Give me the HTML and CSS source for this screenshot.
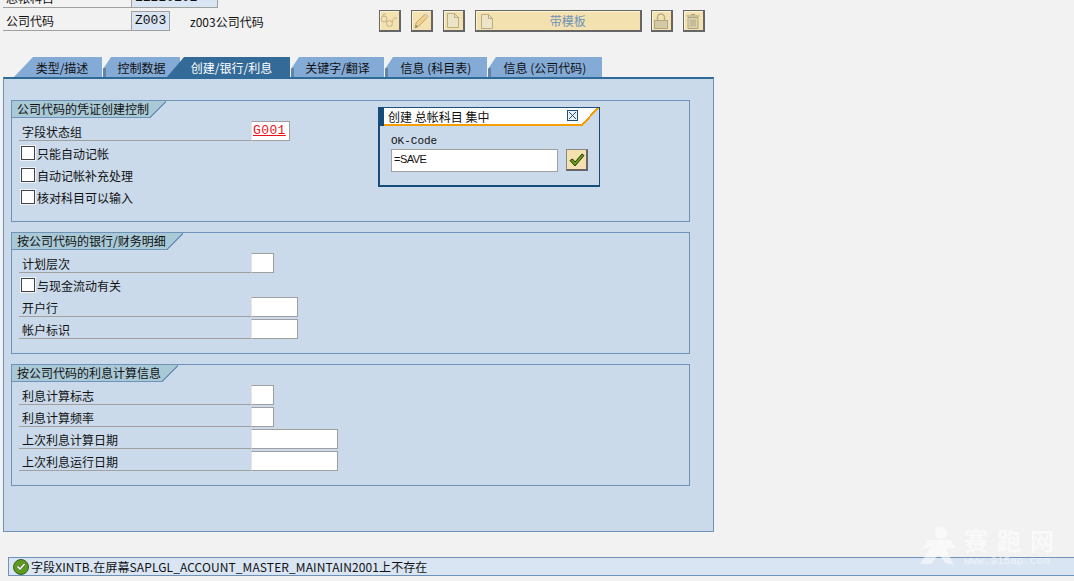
FILE: index.html
```html
<!DOCTYPE html>
<html lang="zh-CN">
<head>
    <meta charset="UTF-8">
    <title>创建 总帐科目 集中</title>
    <link rel="stylesheet" href="styles.css">
</head>
<body>
    <div class="header">
        <div class="head-row head-cut">
            <span class="head-label">总帐科目</span>
            <span class="field head-account">11220101</span>
        </div>
        <div class="head-main">
            <div class="head-row">
                <span class="head-label">公司代码</span>
                <span class="field head-code">Z003</span>
                <span class="head-desc">z003公司代码</span>
            </div>
            <div class="toolbar">
                <button class="btn">
                    <svg width="18" height="15" viewBox="0 0 18 15" fill="none" stroke="#c2b28c" stroke-width="1"><circle cx="4" cy="6" r="3"/><circle cx="9.500" cy="10.500" r="3"/><path d="M6.500 8L7.500 8.500M12 9Q14 3.500 17 5M2.500 3Q3 .5 6 1"/></svg>
                </button>
                <button class="btn">
                    <svg width="15" height="17" viewBox="0 0 15 17"><path d="M1 16l1-5L11 2l3 2.500L5 14z" fill="#f2cf86" stroke="#b9a77e"/><path d="M11 2l3 2.500-1.500 1.500-3-2.500z" fill="#d9cfb0"/><path d="M1 16l1-3 2 1.500z" fill="#8f8468"/></svg>
                </button>
                <button class="btn">
                    <svg class="doc" width="12" height="15" viewBox="0 0 12 15"><path d="M.5.500h7l4 4v10h-11zM7.500.500v4h4" fill="#ebe4c6" stroke="#b9ad88"/></svg>
                </button>
                <button class="btn btn-wide">
                    <svg class="doc" width="12" height="15" viewBox="0 0 12 15"><path d="M.5.500h7l4 4v10h-11zM7.500.500v4h4" fill="#ebe4c6" stroke="#b9ad88"/></svg>
                    <span class="btn-text">带模板</span>
                </button>
                <button class="btn">
                    <svg width="14" height="16" viewBox="0 0 14 16"><path d="M3.500 8V4.500a3.500 3.500 0 0 1 7 0V8" fill="none" stroke="#b9ad88" stroke-width="1.500"/><rect x=".5" y="7.500" width="13" height="8" fill="#d3c9a4" stroke="#b0a584"/></svg>
                </button>
                <button class="btn">
                    <svg width="14" height="16" viewBox="0 0 14 16"><path d="M5 1.500h4M.5 3h13" stroke="#a89d7d" fill="none"/><path d="M2 4.500h10v11H2z" fill="#dcd2ae" stroke="#b0a584"/><path d="M5 6.500v7M7 6.500v7M9 6.500v7" stroke="#b0a584"/></svg>
                </button>
            </div>
        </div>
    </div>

    <div class="tabs">
        <span class="tab tab-first">类型/描述</span>
        <span class="tab tab-control">控制数据</span>
        <span class="tab tab-active">创建/银行/利息</span>
        <span class="tab tab-key">关键字/翻译</span>
        <span class="tab tab-info">信息 (科目表)</span>
        <span class="tab tab-info2">信息 (公司代码)</span>
    </div>

    <div class="panel">
        <section class="group">
            <h2 class="group-title">公司代码的凭证创建控制</h2>
            <div class="row"><span class="row-label">字段状态组</span><span class="field-box w-39 red">G001</span></div>
            <label class="check"><span class="box"></span>只能自动记帐</label>
            <label class="check"><span class="box"></span>自动记帐补充处理</label>
            <label class="check"><span class="box"></span>核对科目可以输入</label>
        </section>
        <section class="group">
            <h2 class="group-title">按公司代码的银行/财务明细</h2>
            <div class="row"><span class="row-label">计划层次</span><span class="field-box w-23"></span></div>
            <label class="check"><span class="box"></span>与现金流动有关</label>
            <div class="row"><span class="row-label">开户行</span><span class="field-box w-47"></span></div>
            <div class="row"><span class="row-label">帐户标识</span><span class="field-box w-47"></span></div>
        </section>
        <section class="group">
            <h2 class="group-title">按公司代码的利息计算信息</h2>
            <div class="row"><span class="row-label">利息计算标志</span><span class="field-box w-23"></span></div>
            <div class="row"><span class="row-label">利息计算频率</span><span class="field-box w-23"></span></div>
            <div class="row"><span class="row-label">上次利息计算日期</span><span class="field-box w-87"></span></div>
            <div class="row"><span class="row-label">上次利息运行日期</span><span class="field-box w-87"></span></div>
        </section>
    </div>

    <div class="dialog">
        <div class="dialog-title">
            <span>创建 总帐科目 集中</span>
            <span class="dialog-close">
                <svg width="9" height="9" viewBox="0 0 9 9" stroke="#1f4e79" fill="none"><path d="M1 1l7 7M8 1L1 8"/></svg>
            </span>
        </div>
        <div class="dialog-label">OK-Code</div>
        <div class="dialog-row">
            <span class="dialog-input">=SAVE</span>
            <button class="btn-ok">
                <svg width="16" height="14" viewBox="0 0 16 14"><path d="M1 7.500l2.500-1.500 2.500 3L13 1l2 1.500L6 13z" fill="#6b9e12" stroke="#26350a" stroke-width="1"/></svg>
            </button>
        </div>
    </div>

    <div class="status">
        <svg width="16" height="16" viewBox="0 0 16 16"><circle cx="8" cy="8" r="7.500" fill="#5d9b1f" stroke="#3b5f22"/><path d="M3.500 8l1.500-1.500 2 2 4-4.500 1.500 1.500L7 11.500z" fill="#fff" stroke="#2f4f1a" stroke-width=".6"/></svg>
        <span>字段XINTB.在屏幕SAPLGL_ACCOUNT_MASTER_MAINTAIN2001上不存在</span>
    </div>

    <div class="watermark">
        <svg width="38" height="40" viewBox="0 0 38 40" fill="#fff" opacity=".55"><circle cx="22" cy="7" r="6"/><path d="M8 14h24l5 8-10 1 8 16-9-2-6-9-8 10H1l11-17-8 2z"/></svg>
        <div class="wm-text">
            <div class="wm-name">赛跑网</div>
            <div class="wm-url">www.915ap.com</div>
        </div>
    </div>
</body>
</html>
```

FILE: styles.css
```css
html, body {
    height: 100%;
}
body {
    margin: 0;
    background-color: #f2f2f2;
    font-family: "Noto Sans CJK SC", sans-serif;
    font-size: 12px;
    color: #111;
    overflow: hidden;
    position: relative;
}
.header {
    margin-top: -12px;
    padding-left: 3px;
}
.head-row {
    display: flex;
    align-items: flex-end;
    height: 20px;
}
.head-cut {
    margin-bottom: 3px;
}
.head-main {
    display: flex;
    align-items: flex-start;
}
.head-label {
    width: 128px;
    height: 19px;
    line-height: 18px;
    padding-left: 3px;
    box-sizing: border-box;
    border-bottom: 1px solid #a0a0a0;
}
.field {
    height: 20px;
    box-sizing: border-box;
    border: 1px solid #a0a0a0;
    background-color: #dae5f3;
    font-family: "Liberation Mono", monospace;
    font-size: 13px;
    line-height: 18px;
    padding-left: 3px;
}
.head-account {
    width: 87px;
}
.head-code {
    width: 39px;
}
.head-desc {
    margin-left: 20px;
    line-height: 19px;
}
.toolbar {
    display: flex;
    margin: -1px 0 0 115px;
    gap: 10px;
}
.btn {
    width: 22px;
    height: 22px;
    padding: 0;
    display: flex;
    align-items: center;
    justify-content: center;
    box-sizing: border-box;
    background-color: #f3e1b0;
    border: 1px solid #666;
    border-right-width: 2px;
    border-bottom-width: 2px;
    box-shadow: inset 1px 1px 0 #fbf3da;
}
.btn-wide {
    width: 167px;
    margin-right: -1px;
    padding-left: 20px;
    position: relative;
    color: #6f93b8;
    font-family: inherit;
    font-size: 12px;
}
.btn-wide .doc {
    position: absolute;
    left: 5px;
    top: 3px;
}
.tabs {
    display: flex;
    height: 20px;
    margin: 25px 0 0 14px;
}
.tab {
    display: block;
    height: 20px;
    line-height: 21px;
    text-align: center;
    background: linear-gradient(#5f86aa, #5f86aa) no-repeat 0 100% / 3px 9px, #84aad6;
    clip-path: polygon(0 100%, 0 60%, 8px 0, 100% 0, 100% 100%);
    margin-right: 1px;
}
.tab-first {
    width: 88px;
    padding-left: 8px;
    box-sizing: border-box;
    background: #84aad6;
    clip-path: polygon(0 100%, 19px 0, 100% 0, 100% 100%);
}
.tab-control {
    width: 77px;
}
.tab-active {
    width: 123px;
    margin-left: -14px;
    padding-left: 6px;
    box-sizing: border-box;
    background: #336a98;
    color: #fff;
    clip-path: polygon(0 100%, 17px 0, 100% 0, 100% 100%);
}
.tab-key {
    width: 93px;
}
.tab-info {
    width: 102px;
}
.tab-info2 {
    width: 114px;
    margin-right: 0;
}
.panel {
    width: 711px;
    height: 455px;
    margin-left: 3px;
    padding: 21px 23px 0 7px;
    box-sizing: border-box;
    background-color: #cadaea;
    border: 1px solid #6f93b8;
    border-top: 2px solid #2f6a99;
    display: flex;
    flex-direction: column;
    gap: 10px;
}
.group {
    height: 122px;
    box-sizing: border-box;
    border: 1px solid #6f93b8;
}
.group-title {
    display: table;
    position: relative;
    height: 17px;
    margin: 0 0 3px;
    padding: 0 1px 0 5px;
    box-sizing: border-box;
    background-color: #a9c9d7;
    border-bottom: 1px solid #6f93b8;
    font-size: 12px;
    font-weight: normal;
    line-height: 16px;
}
.group-title::after {
    content: "";
    position: absolute;
    left: 100%;
    top: 0;
    width: 16px;
    height: 17px;
    background: linear-gradient(to bottom right, #a9c9d7 47%, #6f93b8 47%, #6f93b8 53%, transparent 53%);
}
.row {
    display: flex;
    height: 20px;
    margin: 0 0 2px 7px;
}
.row-label {
    width: 232px;
    box-sizing: border-box;
    padding-left: 3px;
    line-height: 21px;
    border-bottom: 1px solid #a0a0a0;
}
.field-box {
    box-sizing: border-box;
    height: 20px;
    padding-left: 1px;
    background-color: #fff;
    border: 1px solid #a0a0a0;
    border-left-color: #e4e4e4;
    font-family: "Liberation Mono", monospace;
    font-size: 13px;
    line-height: 18px;
}
.w-23 {
    width: 23px;
}
.w-39 {
    width: 39px;
}
.w-47 {
    width: 47px;
}
.w-87 {
    width: 87px;
}
.red {
    color: #e8141c;
    letter-spacing: .4px;
    text-decoration: underline;
}
.check {
    display: flex;
    align-items: center;
    height: 20px;
    margin: 0 0 2px 9px;
    line-height: 21px;
}
.box {
    width: 14px;
    height: 14px;
    margin-right: 2px;
    box-sizing: border-box;
    background-color: #fff;
    border: 1px solid #444;
    box-shadow: 0 0 0 1px #eef3f8;
}
.dialog {
    position: absolute;
    left: 378px;
    top: 107px;
    width: 222px;
    height: 80px;
    box-sizing: border-box;
    background-color: #cadaea;
    border-style: solid;
    border-width: 0 1px 2px 2px;
    border-color: #164c78;
}
.dialog-title {
    height: 19px;
    box-sizing: border-box;
    padding: 0 21px 0 4px;
    display: flex;
    align-items: center;
    justify-content: space-between;
    border-left: 6px solid #164c78;
    margin-left: -2px;
    background:
        linear-gradient(#1f4e79, #1f4e79) no-repeat 0 0 / 100% 1px,
        linear-gradient(to bottom right, #fff 46%, #f59f00 46%, #f59f00 54%, #cadaea 54%) no-repeat 100% 0 / 18px 19px,
        linear-gradient(#fff, #fff) no-repeat 0 0 / calc(100% - 17px) 17px,
        linear-gradient(#f59f00, #f59f00) no-repeat 0 17px / calc(100% - 17px) 2px;
    line-height: 17px;
}
.dialog-close {
    display: flex;
    align-items: center;
    justify-content: center;
    width: 11px;
    height: 11px;
    margin-bottom: 2px;
    box-sizing: border-box;
    border: 1px solid #1f4e79;
    background-color: #eef3f8;
}
.dialog-label {
    margin: 8px 0 0 11px;
    font-family: "Liberation Mono", monospace;
    font-size: 11px;
    line-height: 14px;
}
.dialog-row {
    display: flex;
    gap: 8px;
    margin: 1px 0 0 11px;
}
.dialog-input {
    width: 167px;
    height: 23px;
    box-sizing: border-box;
    padding-left: 2px;
    background-color: #fff;
    border: 1px solid #a0a0a0;
    font-family: "Liberation Sans", sans-serif;
    font-size: 11px;
    letter-spacing: -.5px;
    line-height: 18px;
}
.btn-ok {
    width: 22px;
    height: 22px;
    padding: 0;
    display: flex;
    align-items: center;
    justify-content: center;
    box-sizing: border-box;
    background-color: #f3e1b0;
    border: 1px solid #888;
    border-right: 2px solid #666;
    border-bottom: 2px solid #666;
}
.status {
    position: absolute;
    left: 8px;
    right: 0;
    top: 557px;
    height: 19px;
    box-sizing: border-box;
    display: flex;
    align-items: center;
    gap: 2px;
    padding-left: 4px;
    background-color: #d9e5f3;
    border: 1px solid #6f93b8;
    border-right: 0;
    font-size: 12px;
    letter-spacing: .1px;
}
.watermark {
    position: absolute;
    left: 919px;
    top: 526px;
    display: flex;
    gap: 7px;
    color: #fff;
    pointer-events: none;
}
.wm-text {
    opacity: .55;
}
.wm-name {
    font-size: 24px;
    font-weight: 700;
    letter-spacing: 9px;
    line-height: 28px;
}
.wm-url {
    font-family: "Liberation Mono", monospace;
    font-size: 11px;
    line-height: 14px;
}
```
